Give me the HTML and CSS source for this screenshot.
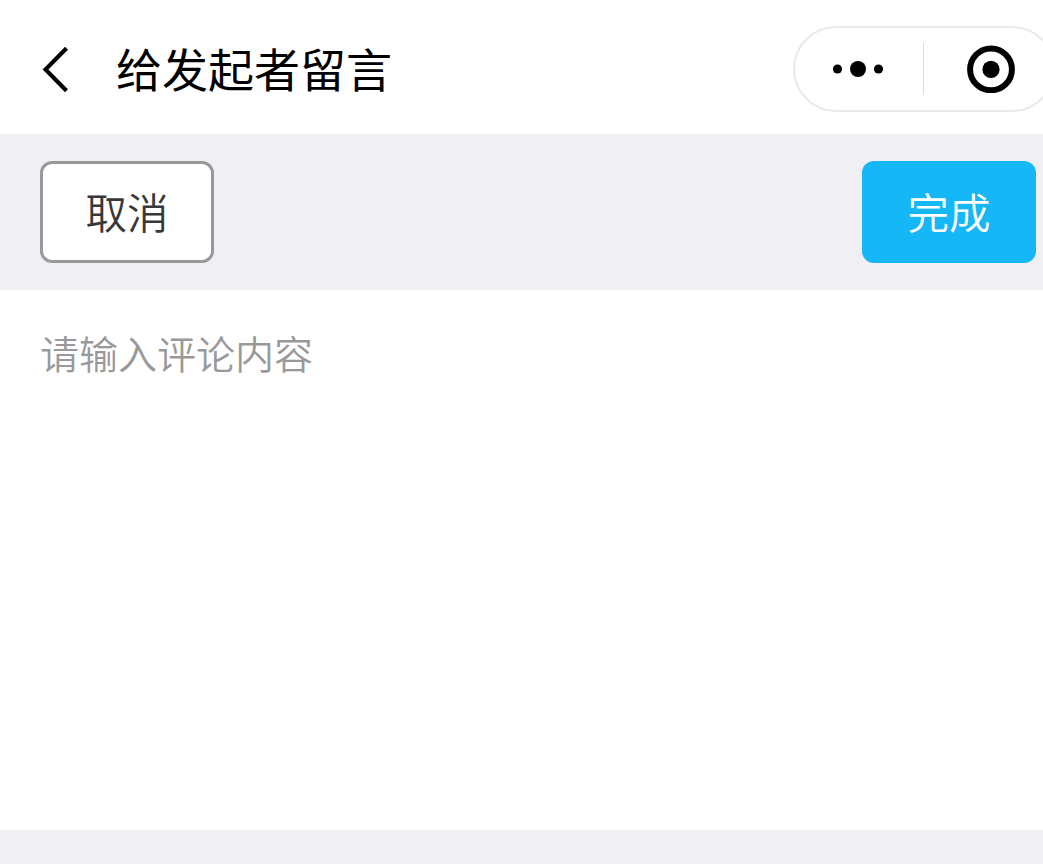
FILE: index.html
```
<!DOCTYPE html>
<html lang="zh-CN">
<head>
<meta charset="utf-8">
<title>给发起者留言</title>
<link rel="stylesheet" href="styles.css">
</head>
<body>
<header class="navbar">
  <svg class="back" width="28" height="48" viewBox="0 0 28 48" fill="none" stroke="#000" stroke-width="4.1"><path d="M25.5 3.3 4.5 24.5 25.5 45.7"/></svg>
  <h1 class="title">给发起者留言</h1>
  <div class="capsule">
    <svg class="dots" width="52" height="18" viewBox="0 0 52 18"><circle cx="5.5" cy="9" r="4.6"/><circle cx="26" cy="9" r="8"/><circle cx="46.5" cy="9" r="4.6"/></svg>
    <span class="divider"></span>
    <svg class="target" width="48" height="48" viewBox="0 0 48 48"><circle cx="24" cy="24.4" r="20.9" fill="none" stroke="#000" stroke-width="6"/><circle cx="24" cy="24.4" r="8.6"/></svg>
  </div>
</header>
<div class="toolbar">
  <button class="btn cancel">取消</button>
  <button class="btn done">完成</button>
</div>
<main class="editor">请输入评论内容</main>
</body>
</html>
```
FILE: styles.css
```
* { box-sizing: border-box; }
body { margin: 0; height: 864px; overflow: hidden; background: #efeff4; font-family: "Noto Sans CJK SC", sans-serif; }
.navbar { display: flex; align-items: center; height: 134px; padding: 4px 0 0 41px; background: #fff; }
.back { flex: none; }
.title { margin: 0 0 4px 47px; font-size: 46px; line-height: 66px; font-weight: 400; color: #000; white-space: nowrap; }
.capsule { display: flex; align-items: center; flex: none; width: 262px; height: 86px; margin: 0 -12px 0 auto; padding-left: 37px; border: 2px solid #e9e9e9; border-radius: 43px; }
.divider { width: 1px; height: 52px; margin: 0 43px 0 39px; background: #dcdcdc; }
.toolbar { display: flex; justify-content: space-between; align-items: center; height: 156px; padding: 0 7px 0 40px; }
.btn { width: 174px; height: 102px; padding: 0 0 2px; border: 0; border-radius: 12px; font: 350 41.5px/60px "Noto Sans CJK SC", sans-serif; }
.cancel { border: 3px solid #999; background: #fff; color: #383838; }
.done { background: #15b7f7; color: #fff; }
.editor { height: 540px; padding: 33px 40px; background: #fff; color: #999; font-size: 39px; font-weight: 350; line-height: 58px; }
```
